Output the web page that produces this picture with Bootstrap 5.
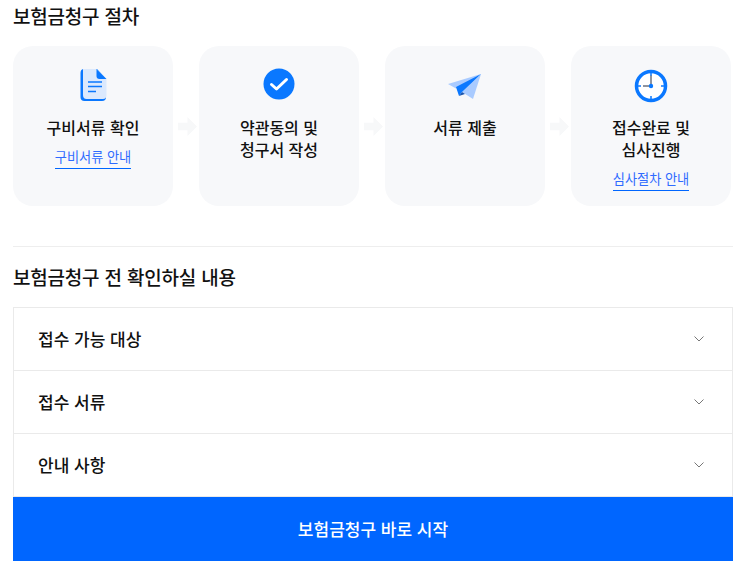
<!DOCTYPE html>
<html lang="ko">
<head>
<meta charset="utf-8">
<title>보험금청구 절차</title>
<link href="https://cdn.jsdelivr.net/npm/bootstrap@5.3.0/dist/css/bootstrap.min.css" rel="stylesheet">
<style>
html,body{background:#fff;overflow:hidden}
body{font-family:"Noto Sans CJK KR","Noto Sans",sans-serif;color:#111;height:569px}
.page-wrap{width:720px;margin-left:13px}
.sec-title{font-size:19px;letter-spacing:-.2px;font-weight:500;line-height:26px;margin:0;color:#111}
.title-one{padding-top:3px}
.steps{margin-top:17px;gap:26px}
.step-box{width:160px;height:160px;flex:none;background:#f7f8fa;border-radius:20px;position:relative;text-align:center;padding-top:21px}
.step-ico{display:block;margin:0 auto;width:36px;height:36px}
.step-name{font-size:16px;font-weight:500;line-height:22px;margin-top:13px;color:#111}
.step-link{display:inline-block;font-size:13.2px;line-height:21px;padding-bottom:1px;color:#2f6bff;border-bottom:1px solid #06f;text-decoration:none;margin-top:8px}
.step-arrow{position:absolute;left:100%;top:71px;margin-left:5px;width:19px;height:19px}
.divider{border-top:1px solid #eee;margin:40px 0 0}
.title-two{margin-top:17px}
.acc-wrap{margin-top:17px;border:1px solid #eaeaea;border-bottom:0}
.acc-row{height:63px;border-bottom:1px solid #eaeaea;padding:0 28px 0 24px;font-size:17px;font-weight:500;color:#111}
.go-btn{display:block;width:100%;height:64px;line-height:64px;padding:0;border:0;border-radius:0;background:#06f;color:#fff;font-size:17px;font-weight:500;text-align:center}
.go-btn:hover{background:#06f;color:#fff}
</style>
</head>
<body>
<main class="page-wrap">
  <h2 class="sec-title title-one">보험금청구 절차</h2>
  <div class="d-flex steps">
    <div class="step-box">
      <svg class="step-ico" viewBox="0 0 36 36"><path d="M5.500 6Q5.500 2 9 2H22L31 12V30Q31 34 27 34H9.500Q5.500 34 5.500 30Z" fill="#0a78ff"/><path d="M8 2H21.500L31.500 12V28Q31.500 32 28 32H11.500Q8 32 8 28Z" fill="#dbe9fd"/><path d="M21.500 2L31.500 12H24.500Q21.500 12 21.500 9Z" fill="#0a78ff"/><path d="M13 15H27M13 19.500H27M13 24.500H21" stroke="#0a78ff" stroke-width="1.500"/></svg>
      <div class="step-name">구비서류 확인</div>
      <a class="step-link" href="#">구비서류 안내</a>
      <svg class="step-arrow" viewBox="0 0 20 20"><path d="M0 6H10V0L20 10 10 20V14H0Z" fill="#f7f8f9"/></svg>
    </div>
    <div class="step-box">
      <svg class="step-ico" viewBox="0 0 36 36"><circle cx="18" cy="17" r="15.500" fill="#0a78ff"/><path d="M10.500 17.500L15.500 22 25.500 12.500" fill="none" stroke="#fff" stroke-width="3" stroke-linecap="round" stroke-linejoin="round"/></svg>
      <div class="step-name">약관동의 및<br>청구서 작성</div>
      <svg class="step-arrow" viewBox="0 0 20 20"><path d="M0 6H10V0L20 10 10 20V14H0Z" fill="#f7f8f9"/></svg>
    </div>
    <div class="step-box">
      <svg class="step-ico" viewBox="0 0 36 36"><path d="M34 7L1 17 9 21.500Z" fill="#a9cbff"/><path d="M34 7L15 25 26 32Z" fill="#a9cbff"/><path d="M34 7L9 20 12 29 15 25Z" fill="#0a78ff"/><path d="M12 29L15 25 18 27Z" fill="#1a56b0"/></svg>
      <div class="step-name">서류 제출</div>
      <svg class="step-arrow" viewBox="0 0 20 20"><path d="M0 6H10V0L20 10 10 20V14H0Z" fill="#f7f8f9"/></svg>
    </div>
    <div class="step-box">
      <svg class="step-ico" viewBox="0 0 36 36"><circle cx="18" cy="19" r="14.500" fill="#fff" stroke="#0a78ff" stroke-width="3.500"/><path d="M18 6V9M18 29V32M5 19H8M28 19H31" stroke="#0a78ff" stroke-width="1.500"/><path d="M18 19V8.500M18 19H10" stroke="#6b7280" stroke-width="1.500"/><circle cx="18" cy="19" r="2.200" fill="#0a78ff"/></svg>
      <div class="step-name">접수완료 및<br>심사진행</div>
      <a class="step-link" href="#">심사절차 안내</a>
    </div>
  </div>
  <hr class="divider opacity-100">
  <h2 class="sec-title title-two">보험금청구 전 확인하실 내용</h2>
  <div class="acc-wrap">
    <div class="acc-row d-flex align-items-center justify-content-between"><span>접수 가능 대상</span><svg width="10" height="6" viewBox="0 0 10 6"><path d="M.5.5L5 5 9.500.5" fill="none" stroke="#777" stroke-width="1"/></svg></div>
    <div class="acc-row d-flex align-items-center justify-content-between"><span>접수 서류</span><svg width="10" height="6" viewBox="0 0 10 6"><path d="M.5.5L5 5 9.500.5" fill="none" stroke="#777" stroke-width="1"/></svg></div>
    <div class="acc-row d-flex align-items-center justify-content-between"><span>안내 사항</span><svg width="10" height="6" viewBox="0 0 10 6"><path d="M.5.5L5 5 9.500.5" fill="none" stroke="#777" stroke-width="1"/></svg></div>
  </div>
  <a class="btn go-btn" href="#">보험금청구 바로 시작</a>
</main>
<script src="https://cdn.jsdelivr.net/npm/bootstrap@5.3.0/dist/js/bootstrap.bundle.min.js"></script>
</body>
</html>
